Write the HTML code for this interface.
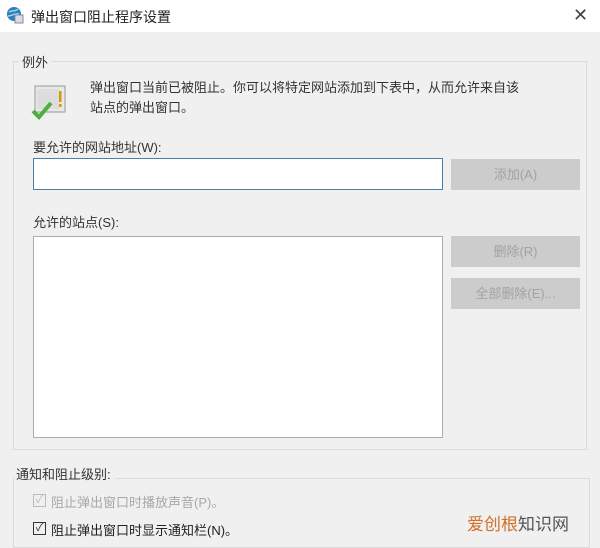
<!DOCTYPE html>
<html><head><meta charset="utf-8"><style>
*{margin:0;padding:0;box-sizing:border-box}
body{width:600px;height:541px;overflow:hidden;background:#f0f0f0;font-family:"Liberation Sans","Noto Sans CJK SC",sans-serif;font-size:13px;color:#222;position:relative}
.a{position:absolute}
.btn{position:absolute;background:#cccccc;color:#a2a2a2;text-align:center;line-height:31px;font-size:13px}
</style></head><body>
<div class="a" style="left:0;top:0;width:600px;height:32px;background:#fff"></div>
<svg class="a" style="left:6px;top:6px" width="18" height="18" viewBox="0 0 18 18"><circle cx="8" cy="8" r="7" fill="#2a7fb8"/><path d="M3 6c3-2 6 0 9-3M2 10c4 0 6-3 11-2" stroke="#9fd0ef" stroke-width="1.5" fill="none"/><rect x="9" y="9" width="8" height="8" fill="#d8dde2" stroke="#889"/></svg>
<div class="a" style="left:31px;top:7px;font-size:14px;color:#222">弹出窗口阻止程序设置</div>
<div class="a" style="left:573px;top:5px;font-size:18px;color:#444">✕</div>
<div class="a" style="left:13px;top:61px;width:574px;height:389px;border:1px solid #dcdcdc"></div>
<div class="a" style="left:19px;top:52px;background:#f0f0f0;padding:0 3px;color:#333">例外</div>
<svg class="a" style="left:31px;top:83px" width="40" height="40" viewBox="0 0 40 40"><rect x="4" y="3" width="30" height="26" fill="#e8e8e8" stroke="#999"/><rect x="6" y="6" width="22" height="20" fill="#ddd"/><rect x="28" y="8" width="2.5" height="11" fill="#d89a00"/><rect x="28" y="21" width="2.5" height="3" fill="#d89a00"/><path d="M2 28l6 6 12-14" stroke="#4caf3e" stroke-width="4" fill="none"/></svg>
<div class="a" style="left:90px;top:78px;line-height:20px;color:#333">弹出窗口当前已被阻止。你可以将特定网站添加到下表中，从而允许来自该<br>站点的弹出窗口。</div>
<div class="a" style="left:33px;top:137px;color:#333">要允许的网站地址(W):</div>
<div class="a" style="left:33px;top:158px;width:410px;height:32px;background:#fff;border:1px solid #4a7fa8"></div>
<div class="btn" style="left:451px;top:159px;width:129px;height:31px">添加(A)</div>
<div class="a" style="left:33px;top:212px;color:#333">允许的站点(S):</div>
<div class="a" style="left:33px;top:236px;width:410px;height:202px;background:#fff;border:1px solid #adadad"></div>
<div class="btn" style="left:451px;top:236px;width:129px;height:31px">删除(R)</div>
<div class="btn" style="left:451px;top:278px;width:129px;height:31px">全部删除(E)...</div>
<div class="a" style="left:13px;top:478px;width:577px;height:70px;border:1px solid #dcdcdc"></div>
<div class="a" style="left:14px;top:464px;background:#f0f0f0;padding:0 4px 0 2px;color:#333">通知和阻止级别:</div>
<div class="a" style="left:33px;top:494px;width:13px;height:13px;border:1px solid #bbb;color:#bbb;font-size:11px;line-height:11px;text-align:center">✓</div>
<div class="a" style="left:51px;top:492px;color:#a8a8a8">阻止弹出窗口时播放声音(P)。</div>
<div class="a" style="left:33px;top:522px;width:13px;height:13px;border:1px solid #333;color:#333;font-size:11px;line-height:11px;text-align:center">✓</div>
<div class="a" style="left:51px;top:520px;color:#222">阻止弹出窗口时显示通知栏(N)。</div>
<div class="a" style="left:467px;top:510px;font-size:17px;color:#555"><span style="color:#d2702a">爱创根</span>知识网</div>
</body></html>
